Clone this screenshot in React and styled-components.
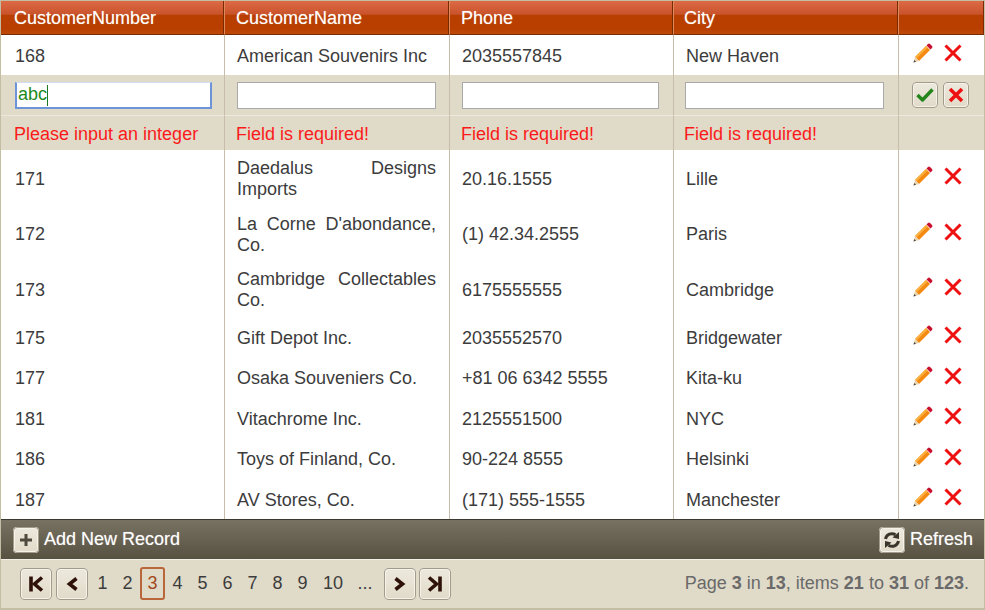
import React from 'react';
import styled, { createGlobalStyle } from 'styled-components';

const GlobalStyle = createGlobalStyle`
  html, body {
    margin: 0;
    padding: 0;
    background: #fff;
    font-family: "Liberation Sans", Arial, sans-serif;
  }
`

const Grid = styled.div`
  width: 985px;
  height: 610px;
  box-sizing: border-box;
  border: 1px solid #c3bda4;
  border-bottom-width: 2px;
  display: flex;
  flex-direction: column;
  overflow: hidden;
`

const Table = styled.table`
  width: 983px;
  table-layout: fixed;
  border-collapse: separate;
  border-spacing: 0;
  font-size: 18px;
  color: #3c3c3c;
`

const HeadCell = styled.th`
  height: 34px;
  box-sizing: border-box;
  padding: 1px 0 0 ${props => props.$pad || 12}px;
  text-align: left;
  font-weight: normal;
  font-size: 18px;
  color: #fff;
  text-shadow: 0 0 1px rgba(255, 255, 255, 0.45);
  background: linear-gradient(#dc6a45 0, #c9532b 40%, #b93f00 44%, #b93f00 85%, #bd4a0c 100%);
  border-bottom: 1px solid #7a2a00;
  border-right: 1px solid #e08a5c;
  box-shadow: inset -2px 0 0 -1px #7a2a00;

  &:last-child {
    border-right: 0;
  }
`

const Row = styled.tr`
  height: ${props => props.$h}px;
  background: ${props => props.$tint ? '#e0dac8' : '#fff'};
`

const Cell = styled.td`
  box-sizing: border-box;
  padding: ${props => props.$pad || '2px 13px 0 12px'};
  border-right: 1px solid #c8bcaa;
  border-top: ${props => props.$rule ? '1px solid #ece8dc' : '0'};
  line-height: 21px;
  text-align: ${props => props.$justify ? 'justify' : 'left'};
  color: ${props => props.$error ? '#fb1a1a' : 'inherit'};

  &:last-child {
    border-right: 0;
    padding: 0 0 0 13px;
  }
`

const InputWrap = styled.div`
  position: relative;
  width: ${props => props.$w}px;
  height: 27px;
`

const Input = styled.input`
  display: block;
  width: 100%;
  height: 27px;
  box-sizing: border-box;
  margin: 0;
  padding: 0 1px;
  border: 1px solid ${props => props.$focus ? '#6d94d8' : '#a9a9a9'};
  border-left-width: ${props => props.$focus ? 2 : 1}px;
  border-right-width: ${props => props.$focus ? 2 : 1}px;
  border-bottom-width: ${props => props.$focus ? 2 : 1}px;
  border-top-color: ${props => props.$focus ? '#cfdcf4' : '#a9a9a9'};
  background: #fff;
  outline: none;
  font: 18px "Liberation Sans", Arial, sans-serif;
  color: #1e8a1e;
`

const Caret = styled.span`
  position: absolute;
  left: 32px;
  top: 3px;
  width: 1px;
  height: 21px;
  background: #1e7a1e;
`

const Actions = styled.div`
  display: flex;
  align-items: center;
  gap: ${props => props.$gap}px;
  padding-bottom: ${props => props.$lift || 0}px;
`

const IconBtn = styled.span`
  display: inline-flex;
  align-items: center;
  justify-content: center;
  flex: none;
  width: 26px;
  height: 26px;
  box-sizing: border-box;
  border-radius: 4px;
  background: linear-gradient(#ece8dc, #e2dbca);
  border: 2px solid #f5f2ea;
  outline: 1px solid #a39c8b;
  outline-offset: -1px;
`

const Toolbar = styled.div`
  height: 40px;
  box-sizing: border-box;
  display: flex;
  align-items: center;
  justify-content: space-between;
  padding: 0 11px 0 12px;
  border-top: 1px solid #3b3830;
  background: linear-gradient(#787262, #575142);
  color: #fff;
  font-size: 18px;
  text-shadow: 0 0 1px rgba(255, 255, 255, 0.45);
`

const ToolButton = styled.span`
  display: flex;
  align-items: center;
  gap: 5px;
`

const Pager = styled.div`
  flex: 1;
  display: flex;
  align-items: center;
  justify-content: space-between;
  padding: 0 15px 1px 19px;
  background: #e0dac8;
  border-top: 1px solid #f2efe6;
`

const PageList = styled.div`
  display: flex;
  align-items: center;
  font-size: 18px;
  color: #3c3c3c;
`

const PageNum = styled.span`
  width: ${props => props.$w || 25}px;
  height: 33px;
  box-sizing: border-box;
  display: flex;
  align-items: center;
  justify-content: center;
  border-radius: 3px;
  color: ${props => props.$on ? '#a2481c' : 'inherit'};
  border: ${props => props.$on ? '2px solid #b9663a' : '0'};
`

const PageBtn = styled(IconBtn)`
  width: 32px;
  height: 32px;
  margin: ${props => props.$m || '0'};
`

const Summary = styled.div`
  font-size: 18px;
  color: #6a6a6a;

  b {
    font-weight: bold;
  }
`

const Pencil = () => (
  <svg width="22" height="22" viewBox="0 0 22 22">
    <path d="M3 15 L14 4 L18 8 L7 19 Z" fill="#f58a12" />
    <path d="M3 15 L14 4 L15.5 5.5 L4.5 16.5 Z" fill="#fbb040" />
    <path d="M14.5 3.5 L16 2 Q17 1 18 2 L20 4 Q21 5 20 6 L18.5 7.5 Z" fill="#c8102e" />
    <path d="M3 15 L7 19 L1.5 20.5 Z" fill="#e9d3ae" />
    <path d="M2.2 18 L4 19.8 L1.5 20.5 Z" fill="#444" />
  </svg>
)

const Cross = ({ size = 20, weight = 3 }) => (
  <svg width={size} height={size} viewBox="0 0 20 20">
    <path d="M2.5 2.5 L17.5 17.5 M17.5 2.5 L2.5 17.5" stroke="#ee1111" strokeWidth={weight} fill="none" />
  </svg>
)

const Check = () => (
  <svg width="18" height="16" viewBox="0 0 18 16">
    <path d="M1.5 8 L6.5 13 L16.5 2.5" stroke="#23851c" strokeWidth="3.4" fill="none" strokeLinejoin="round" />
  </svg>
)

const Plus = () => (
  <svg width="14" height="14" viewBox="0 0 14 14">
    <path d="M7 1 V13 M1 7 H13" stroke="#4f4a3e" strokeWidth="3" />
  </svg>
)

const Sync = () => (
  <svg width="18" height="18" viewBox="0 0 18 18">
    <path d="M2.5 8 A6.5 6.5 0 0 1 12.5 3.8" stroke="#3a352b" strokeWidth="3" fill="none" />
    <path d="M16 1 L16 8 L9.5 6.5 Z" fill="#3a352b" />
    <path d="M15.5 10 A6.5 6.5 0 0 1 5.5 14.2" stroke="#3a352b" strokeWidth="3" fill="none" />
    <path d="M2 17 L2 10 L8.5 11.5 Z" fill="#3a352b" />
  </svg>
)

const Chevron = ({ flip, bar }) => (
  <svg width="18" height="18" viewBox="0 0 18 18" style={flip ? { transform: 'scaleX(-1)' } : undefined}>
    {bar && <path d="M4 1.5 V16.5" stroke="#2e1108" strokeWidth="3.6" />}
    <path d={bar ? 'M15 2.5 L7.5 9 L15 15.5' : 'M13.5 3.5 L6.5 9 L13.5 14.5'} stroke="#2e1108" strokeWidth="3.6" fill="none" />
  </svg>
)

const rows = [
  ['171', 'Daedalus Designs Imports', '20.16.1555', 'Lille', 56, true],
  ['172', "La Corne D'abondance, Co.", '(1) 42.34.2555', 'Paris', 55, true],
  ['173', 'Cambridge Collectables Co.', '6175555555', 'Cambridge', 56, true],
  ['175', 'Gift Depot Inc.', '2035552570', 'Bridgewater', 40],
  ['177', 'Osaka Souveniers Co.', '+81 06 6342 5555', 'Kita-ku', 41],
  ['181', 'Vitachrome Inc.', '2125551500', 'NYC', 40],
  ['186', 'Toys of Finland, Co.', '90-224 8555', 'Helsinki', 41],
  ['187', 'AV Stores, Co.', '(171) 555-1555', 'Manchester', 40],
]

const DataRow = ({ num, name, phone, city, h = 40, justify }) => (
  <Row $h={h}>
    <Cell $pad="2px 12px 0 14px">{num}</Cell>
    <Cell $justify={justify}>{name}</Cell>
    <Cell>{phone}</Cell>
    <Cell>{city}</Cell>
    <Cell>
      <Actions $gap={9} $lift={4}>
        <Pencil />
        <Cross />
      </Actions>
    </Cell>
  </Row>
)

function App() {
  return (
    <Grid>
      <GlobalStyle />
      <Table>
        <colgroup>
          <col style={{ width: 224 }} />
          <col style={{ width: 225 }} />
          <col style={{ width: 224 }} />
          <col style={{ width: 225 }} />
          <col />
        </colgroup>
        <thead>
          <tr>
            <HeadCell $pad={13}>CustomerNumber</HeadCell>
            <HeadCell $pad={11}>CustomerName</HeadCell>
            <HeadCell $pad={11}>Phone</HeadCell>
            <HeadCell $pad={10}>City</HeadCell>
            <HeadCell />
          </tr>
        </thead>
        <tbody>
          <DataRow num="168" name="American Souvenirs Inc" phone="2035557845" city="New Haven" />

          {/* Insert row */}
          <Row $h={40} $tint>
            <Cell $pad="0 0 0 14px">
              <InputWrap $w={197}>
                <Input $focus defaultValue="abc" />
                <Caret />
              </InputWrap>
            </Cell>
            <Cell $pad="0 0 0 12px"><InputWrap $w={199}><Input /></InputWrap></Cell>
            <Cell $pad="0 0 0 12px"><InputWrap $w={197}><Input /></InputWrap></Cell>
            <Cell $pad="0 0 0 11px"><InputWrap $w={199}><Input /></InputWrap></Cell>
            <Cell>
              <Actions $gap={5}>
                <IconBtn><Check /></IconBtn>
                <IconBtn><Cross size={16} weight={4.5} /></IconBtn>
              </Actions>
            </Cell>
          </Row>
          <Row $h={35} $tint>
            <Cell $rule $error $pad="2px 0 0 13px">Please input an integer</Cell>
            <Cell $rule $error $pad="2px 0 0 11px">Field is required!</Cell>
            <Cell $rule $error $pad="2px 0 0 11px">Field is required!</Cell>
            <Cell $rule $error $pad="2px 0 0 10px">Field is required!</Cell>
            <Cell $rule />
          </Row>

          {rows.map(r => (
            <DataRow key={r[0]} num={r[0]} name={r[1]} phone={r[2]} city={r[3]} h={r[4]} justify={r[5]} />
          ))}
        </tbody>
      </Table>

      <Toolbar>
        <ToolButton>
          <IconBtn><Plus /></IconBtn>
          Add New Record
        </ToolButton>
        <ToolButton>
          <IconBtn><Sync /></IconBtn>
          Refresh
        </ToolButton>
      </Toolbar>

      <Pager>
        <PageList>
          <PageBtn $m="0 4px 0 0"><Chevron bar /></PageBtn>
          <PageBtn $m="0 2px 0 0"><Chevron /></PageBtn>
          <PageNum>1</PageNum>
          <PageNum>2</PageNum>
          <PageNum $on>3</PageNum>
          <PageNum>4</PageNum>
          <PageNum>5</PageNum>
          <PageNum>6</PageNum>
          <PageNum>7</PageNum>
          <PageNum>8</PageNum>
          <PageNum>9</PageNum>
          <PageNum $w={36}>10</PageNum>
          <PageNum $w={28}>...</PageNum>
          <PageBtn $m="0 3px 0 5px"><Chevron flip /></PageBtn>
          <PageBtn><Chevron flip bar /></PageBtn>
        </PageList>
        <Summary>
          Page <b>3</b> in <b>13</b>, items <b>21</b> to <b>31</b> of <b>123</b>.
        </Summary>
      </Pager>
    </Grid>
  );
}

export default App;
